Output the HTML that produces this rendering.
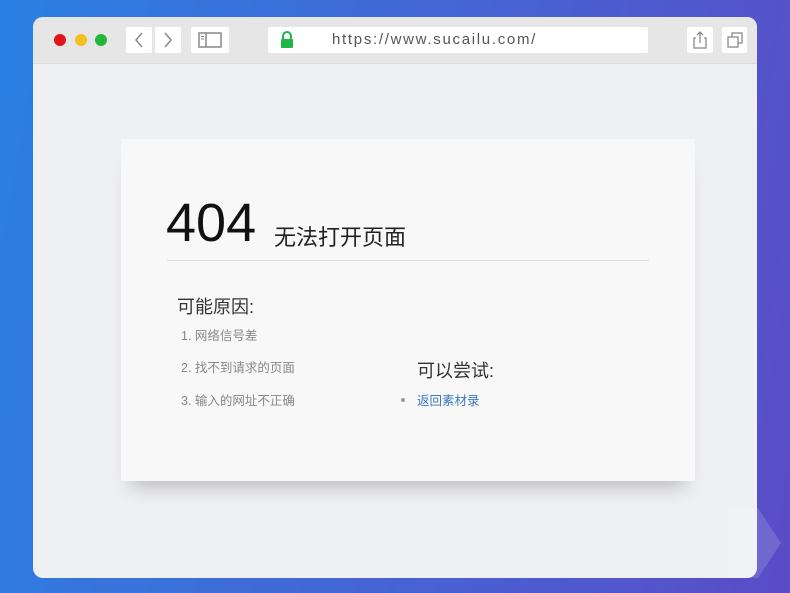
<!DOCTYPE html>
<html><head><meta charset="utf-8"><style>
*{margin:0;padding:0;box-sizing:border-box}
body{width:790px;height:593px;overflow:hidden;background:linear-gradient(100deg,#2a80e2 0%,#4466d6 50%,#5a4cc6 100%);font-family:"Liberation Sans","Noto Sans CJK SC",sans-serif;position:relative}
.win{position:absolute;left:33px;top:17px;width:724px;height:561px;border-radius:10px;background:#eff0f2;overflow:hidden}
.bar{position:absolute;left:0;top:0;width:724px;height:47px;background:#e6e6e6;border-bottom:1px solid #dcdcdc}
.dot{position:absolute;top:17px;width:12px;height:12px;border-radius:50%}
.btn{position:absolute;top:10px;height:26px;background:#fff;border-radius:2px}
.url{position:absolute;left:235px;top:10px;width:380px;height:26px;background:#fff;border-radius:2px}
.card{position:absolute;left:88px;top:122px;width:574px;height:342px;background:#f8f8f8;box-shadow:0 16px 18px -10px rgba(0,0,0,.22)}
.t{position:absolute;white-space:nowrap}
</style></head><body>
<div class="win">
 <div class="bar">
  <div class="dot" style="left:21px;background:#e0161b"></div>
  <div class="dot" style="left:42px;background:#f7bf1e"></div>
  <div class="dot" style="left:62px;background:#25b53a"></div>
  <div class="btn" style="left:93px;width:26px"><svg width="26" height="26"><path d="M16 6 L10 13 L16 20" stroke="#888" stroke-width="1.5" fill="none"/></svg></div>
  <div class="btn" style="left:122px;width:26px"><svg width="26" height="26"><path d="M10 6 L16 13 L10 20" stroke="#888" stroke-width="1.5" fill="none"/></svg></div>
  <div class="btn" style="left:158px;width:38px"><svg width="38" height="26"><rect x="8" y="6" width="22" height="14" stroke="#888" stroke-width="1.5" fill="none"/><line x1="15" y1="6" x2="15" y2="20" stroke="#888" stroke-width="1.5"/><line x1="10" y1="9.5" x2="13" y2="9.5" stroke="#888"/><line x1="10" y1="12" x2="13" y2="12" stroke="#888"/></svg></div>
  <div class="url"><svg style="position:absolute;left:11px;top:4px" width="16" height="18"><path d="M4 8 V5 a4 4 0 0 1 8 0 V8" stroke="#1eb549" stroke-width="2" fill="none"/><rect x="2" y="8" width="12" height="9" rx="1" fill="#1eb549"/></svg>
   <span class="t" style="left:64px;top:4px;font-size:15px;color:#555;letter-spacing:1.7px">https://www.sucailu.com/</span></div>
  <div class="btn" style="left:654px;width:26px"><svg width="26" height="26"><path d="M9 11 H7 V21 H19 V11 H17" stroke="#888" stroke-width="1.3" fill="none"/><path d="M13 16 V5 M10 8 L13 5 L16 8" stroke="#888" stroke-width="1.3" fill="none"/></svg></div>
  <div class="btn" style="left:689px;width:25px"><svg width="25" height="26"><rect x="6" y="10" width="10" height="10" stroke="#888" stroke-width="1.3" fill="none"/><path d="M10 10 V6 H20 V16 H16" stroke="#888" stroke-width="1.3" fill="none"/></svg></div>
 </div>
 <div class="card">
  <span class="t" style="left:45px;top:52px;font-size:54px;color:#111;line-height:64px">404</span>
  <span class="t" style="left:153px;top:81px;font-size:22px;color:#222">无法打开页面</span>
  <div style="position:absolute;left:46px;top:121px;width:482px;height:1px;background:#ddd"></div>
  <span class="t" style="left:56px;top:154px;font-size:18px;color:#333">可能原因:</span>
  <span class="t" style="left:60px;top:186px;font-size:12.5px;color:#888">1. 网络信号差</span>
  <span class="t" style="left:60px;top:218px;font-size:12.5px;color:#888">2. 找不到请求的页面</span>
  <span class="t" style="left:60px;top:251px;font-size:12.5px;color:#888">3. 输入的网址不正确</span>
  <span class="t" style="left:296px;top:218px;font-size:18px;color:#333">可以尝试:</span>
  <div style="position:absolute;left:280px;top:259px;width:4px;height:4px;border-radius:50%;background:#999"></div>
  <span class="t" style="left:296px;top:251px;font-size:12.5px;color:#3a7bbf">返回素材录</span>
 </div>
</div>
<svg style="position:absolute;left:728px;top:508px" width="55" height="72"><path d="M0 0 H30 L53 35 L30 70 H0 Z" fill="rgba(255,255,255,0.15)"/></svg>
</body></html>
